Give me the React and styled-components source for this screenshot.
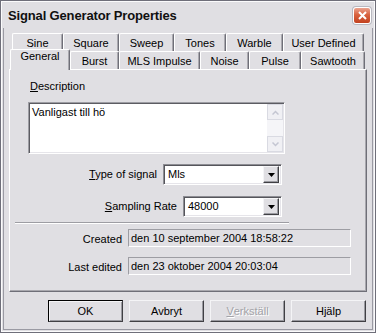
import React from "react";
import styled, { createGlobalStyle } from "styled-components";

const Global = createGlobalStyle`
  html, body {
    margin: 0;
    padding: 0;
    background: #e0dfe3;
  }
  body {
    font-family: "Liberation Sans", Arial, sans-serif;
    font-size: 11px;
    color: #000;
  }
  * {
    box-sizing: border-box;
  }
`;

const Window = styled.div`
  width: 376px;
  height: 333px;
  background: #e0dfe3;
  border: 1px solid #6f6f7a;
  padding: 1px;
  box-shadow: inset 0 0 0 1px #fbfbfc;
  display: flex;
  flex-direction: column;
`;

const TitleBar = styled.div`
  height: 26px;
  flex: none;
  display: flex;
  align-items: center;
  justify-content: space-between;
  padding: 0 3px 0 6px;
`;

const TitleText = styled.span`
  font-weight: bold;
  font-size: 13px;
  letter-spacing: -0.15px;
  color: #101010;
  padding-top: 1px;
`;

const CloseButton = styled.div`
  width: 18px;
  height: 17px;
  border: 1px solid #fff;
  border-radius: 3px;
  background: linear-gradient(180deg, #eba38f 0%, #d9623f 45%, #c2411f 100%);
  box-shadow: 0 0 0 1px #b8b8c0;
  display: flex;
  align-items: center;
  justify-content: center;
`;

const Client = styled.div`
  flex: 1;
  margin: 0 1px 1px;
  border: 1px solid #9a9aa3;
  border-top: none;
  padding: 5px 5px 0;
  display: flex;
  flex-direction: column;
`;

const TabRow = styled.div`
  display: flex;
  height: 18px;
  align-items: flex-end;
  margin-left: ${(p) => p.$indent}px;
`;

const Tab = styled.div`
  width: ${(p) => p.$w}px;
  height: ${(p) => (p.$active ? 21 : 18)}px;
  margin-bottom: ${(p) => (p.$active ? -1 : 0)}px;
  padding-top: ${(p) => (p.$active ? 0 : 3)}px;
  text-align: center;
  line-height: 13px;
  background: #e0dfe3;
  border-top: 1px solid #fff;
  border-left: 1px solid #fff;
  border-right: 1px solid #6f6f78;
  box-shadow: inset -1px 0 0 #a9a8ae;
  border-radius: 2px 2px 0 0;
  position: relative;
  z-index: ${(p) => (p.$active ? 2 : 0)};
  white-space: nowrap;
`;

const Panel = styled.div`
  height: 223px;
  flex: none;
  border-top: 1px solid #fff;
  border-left: 1px solid #fff;
  border-right: 1px solid #6f6f78;
  border-bottom: 1px solid #6f6f78;
  box-shadow: inset -1px -1px 0 #a9a8ae;
  display: flex;
  flex-direction: column;
  position: relative;
  z-index: 1;
`;

const Label = styled.span`
  line-height: 13px;
  white-space: nowrap;
`;

const Key = styled.span`
  text-decoration: underline;
`;

const DescLabel = styled(Label)`
  margin: 10px 0 0 20px;
`;

const Memo = styled.div`
  margin: 9px 0 0 18px;
  width: 257px;
  height: 52px;
  background: #fff;
  border-top: 1px solid #9d9da3;
  border-left: 1px solid #9d9da3;
  border-right: 1px solid #fff;
  border-bottom: 1px solid #fff;
  box-shadow: inset 1px 1px 0 #5c5c62, inset -1px -1px 0 #e6e5ea;
  display: flex;
  padding: 1px;
`;

const MemoText = styled.div`
  flex: 1;
  padding: 2px 0 0 2px;
  line-height: 13px;
`;

const ScrollBar = styled.div`
  width: 16px;
  background: #f5f5f8;
  display: flex;
  flex-direction: column;
  justify-content: space-between;
`;

const ScrollButton = styled.div`
  width: 16px;
  height: 16px;
  background: #f0f0f4;
  border: 1px solid #d9dae2;
  display: flex;
  align-items: center;
  justify-content: center;
`;

const FieldRow = styled.div`
  margin: ${(p) => p.$top}px 0 0 18px;
  width: 256px;
  padding-right: 2px;
  display: flex;
  align-items: center;
  justify-content: flex-end;
  gap: 6px;
`;

const Combo = styled.div`
  width: ${(p) => p.$w}px;
  height: 21px;
  background: #fff;
  border-top: 1px solid #8d8d93;
  border-left: 1px solid #8d8d93;
  border-right: 1px solid #fff;
  border-bottom: 1px solid #fff;
  box-shadow: inset 1px 1px 0 #55555b, inset -1px -1px 0 #e6e5ea;
  display: flex;
  align-items: center;
  padding: 2px;
`;

const ComboText = styled.span`
  flex: 1;
  padding-left: 2px;
  line-height: 13px;
`;

const DropButton = styled.div`
  width: 16px;
  height: 17px;
  background: #e0dfe3;
  border-top: 1px solid #f4f4f6;
  border-left: 1px solid #f4f4f6;
  border-right: 1px solid #404044;
  border-bottom: 1px solid #404044;
  box-shadow: inset -1px -1px 0 #9a9aa0;
  display: flex;
  align-items: center;
  justify-content: center;
`;

const Separator = styled.div`
  margin: 5px 0 0 5px;
  width: 274px;
  height: 2px;
  border-top: 1px solid #9d9da3;
  border-bottom: 1px solid #fff;
`;

const InfoRow = styled.div`
  margin-top: ${(p) => p.$top}px;
  display: grid;
  grid-template-columns: 112px 223px;
  column-gap: 6px;
  align-items: center;
`;

const InfoLabel = styled(Label)`
  text-align: right;
  padding-top: 2px;
`;

const StaticField = styled.div`
  height: 18px;
  border-top: 1px solid #9d9da3;
  border-left: 1px solid #9d9da3;
  border-right: 1px solid #fff;
  border-bottom: 1px solid #fff;
  padding: 2px 0 0 2px;
  line-height: 13px;
  white-space: nowrap;
`;

const ButtonBar = styled.div`
  margin-top: 8px;
  display: flex;
  justify-content: flex-end;
  gap: 6px;
  padding-right: 1px;
`;

const Button = styled.div`
  width: 75px;
  height: 22px;
  background: #e0dfe3;
  border: 1px solid ${(p) => (p.$default ? "#000" : "#f4f4f6")};
  border-right-color: #404044;
  border-bottom-color: #404044;
  box-shadow: ${(p) =>
    p.$default
      ? "inset 1px 1px 0 #f4f4f6, inset -1px -1px 0 #9a9aa0"
      : "inset -1px -1px 0 #9a9aa0"};
  display: flex;
  align-items: center;
  justify-content: center;
  line-height: 13px;
  color: ${(p) => (p.$disabled ? "#a3a3a8" : "#000")};
  text-shadow: ${(p) => (p.$disabled ? "1px 1px 0 #fff" : "none")};
`;

const Arrow = () => (
  <svg width="7" height="4" viewBox="0 0 7 4">
    <path d="M0 0h7L3.5 4z" fill="#000" />
  </svg>
);

const Chevron = ({ up }) => (
  <svg width="7" height="5" viewBox="0 0 7 5">
    <path
      d={up ? "M0.5 4.5L3.5 1.5L6.5 4.5" : "M0.5 0.5L3.5 3.5L6.5 0.5"}
      stroke="#c4c6d2"
      strokeWidth="1.5"
      fill="none"
    />
  </svg>
);

const backTabs = [
  ["Sine", 51],
  ["Square", 56],
  ["Sweep", 55],
  ["Tones", 52],
  ["Warble", 57],
  ["User Defined", 81],
];

const frontTabs = [
  ["General", 60],
  ["Burst", 49],
  ["MLS Impulse", 81],
  ["Noise", 49],
  ["Pulse", 52],
  ["Sawtooth", 64],
];

export default function App() {
  return (
    <>
      <Global />
      <Window>
        <TitleBar>
          <TitleText>Signal Generator Properties</TitleText>
          <CloseButton>
            <svg width="9" height="9" viewBox="0 0 9 9">
              <path d="M1 1L8 8M8 1L1 8" stroke="#fff" strokeWidth="2" />
            </svg>
          </CloseButton>
        </TitleBar>
        <Client>
          <TabRow $indent={3}>
            {backTabs.map(([name, w]) => (
              <Tab key={name} $w={w}>
                {name}
              </Tab>
            ))}
          </TabRow>
          <TabRow $indent={1}>
            {frontTabs.map(([name, w], i) => (
              <Tab key={name} $w={w} $active={i === 0}>
                {name}
              </Tab>
            ))}
          </TabRow>
          <Panel>
            <DescLabel>
              <Key>D</Key>escription
            </DescLabel>
            <Memo>
              <MemoText>Vanligast till hö</MemoText>
              <ScrollBar>
                <ScrollButton>
                  <Chevron up />
                </ScrollButton>
                <ScrollButton>
                  <Chevron />
                </ScrollButton>
              </ScrollBar>
            </Memo>
            <FieldRow $top={10}>
              <Label>
                <Key>T</Key>ype of signal
              </Label>
              <Combo $w={119}>
                <ComboText>Mls</ComboText>
                <DropButton>
                  <Arrow />
                </DropButton>
              </Combo>
            </FieldRow>
            <FieldRow $top={11}>
              <Label>
                <Key>S</Key>ampling Rate
              </Label>
              <Combo $w={99}>
                <ComboText>48000</ComboText>
                <DropButton>
                  <Arrow />
                </DropButton>
              </Combo>
            </FieldRow>
            <Separator />
            <InfoRow $top={5}>
              <InfoLabel>Created</InfoLabel>
              <StaticField>den 10 september 2004 18:58:22</StaticField>
            </InfoRow>
            <InfoRow $top={10}>
              <InfoLabel>Last edited</InfoLabel>
              <StaticField>den 23 oktober 2004 20:03:04</StaticField>
            </InfoRow>
          </Panel>
          <ButtonBar>
            <Button $default>OK</Button>
            <Button>Avbryt</Button>
            <Button $disabled>
              <Key>V</Key>erkställ
            </Button>
            <Button>Hjälp</Button>
          </ButtonBar>
        </Client>
      </Window>
    </>
  );
}
